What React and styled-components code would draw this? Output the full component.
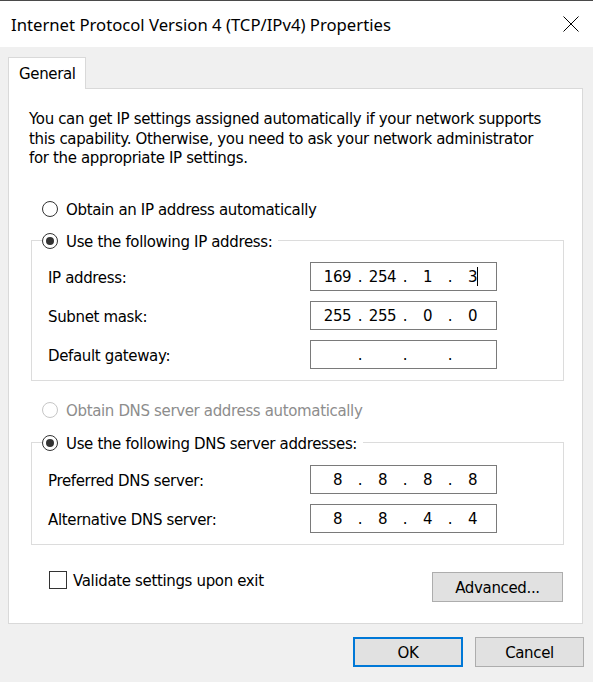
import React from "react";
import styled, { createGlobalStyle } from "styled-components";

const Global = createGlobalStyle`
  html, body { margin: 0; padding: 0; }
  body {
    background: #f0f0f0;
    font-family: "DejaVu Sans", "Liberation Sans", sans-serif;
    font-size: 15px;
    letter-spacing: -0.35px;
    color: #000;
  }
  * { box-sizing: border-box; }
`;

const Window = styled.div`
  width: 593px;
  height: 682px;
  display: flex;
  flex-direction: column;
  background: #f0f0f0;
  overflow: hidden;
`;

const TitleBar = styled.div`
  height: 47px;
  border-top: 1px solid #4a4a4a;
  background: #fff;
  display: flex;
  align-items: center;
  justify-content: space-between;
  padding: 0 14px 0 11px;
`;

const Title = styled.span`
  font-family: "Noto Sans", "Open Sans", sans-serif;
  font-size: 16.7px;
  letter-spacing: 0;
  color: #000;
`;

const CloseIcon = styled.svg`
  width: 16px;
  height: 16px;
  display: block;
`;

const Body = styled.div`
  padding: 10px 0 0 8px;
  display: flex;
  flex-direction: column;
`;

const Tab = styled.div`
  position: relative;
  z-index: 1;
  width: 78px;
  height: 32px;
  margin-bottom: -1px;
  background: #fff;
  border: 1px solid #d9d9d9;
  border-bottom: none;
  display: flex;
  align-items: center;
  padding-left: 10px;
  padding-top: 1px;
`;

const Panel = styled.div`
  width: 575px;
  background: #fff;
  border: 1px solid #d9d9d9;
  padding: 20px 18px 21px 19px;
  display: flex;
  flex-direction: column;
`;

const Description = styled.div`
  line-height: 19.5px;
  white-space: nowrap;
  padding: 1px 0 0 1px;
`;

const RadioRow = styled.label`
  display: flex;
  align-items: center;
  gap: 8px;
  height: 20px;
  margin-top: ${(p) => p.$top}px;
  padding-left: 14px;
  color: ${(p) => (p.$disabled ? "#8d8d8d" : "#000")};
`;

const RadioText = styled.span`
  padding-top: 2px;
`;

const Radio = styled.span`
  width: 16px;
  height: 16px;
  border-radius: 50%;
  border: 1px solid ${(p) => (p.$disabled ? "#c6c6c6" : "#333")};
  background: #fff;
  display: flex;
  align-items: center;
  justify-content: center;
  flex: none;
  &::after {
    content: "";
    width: 8px;
    height: 8px;
    border-radius: 50%;
    background: #333;
    display: ${(p) => (p.$checked ? "block" : "none")};
  }
`;

const Group = styled.fieldset`
  margin: ${(p) => p.$top}px 0 0 3px;
  padding: ${(p) => p.$padTop}px 0 11px 0;
  border: 1px solid #dcdcdc;
  min-width: 0;
`;

const Legend = styled.legend`
  margin-left: 10px;
  padding: 0 6px 0 0;
  height: 20px;
  display: flex;
  align-items: center;
  gap: 8px;
`;

const Rows = styled.div`
  display: flex;
  flex-direction: column;
  gap: 10px;
  padding-left: 16px;
`;

const Row = styled.div`
  display: grid;
  grid-template-columns: 262px 187px;
  align-items: center;
`;

const FieldLabel = styled.span`
  padding-top: 3px;
`;

const IPBox = styled.div`
  width: 187px;
  height: 29px;
  border: 1px solid #7a7a7a;
  background: #fff;
  display: flex;
  align-items: center;
  padding: 2px 0 0 8px;
`;

const Octet = styled.span`
  width: 37px;
  text-align: center;
  white-space: nowrap;
`;

const Dot = styled.span`
  width: 8px;
  text-align: center;
`;

const Caret = styled.span`
  display: inline-block;
  width: 1px;
  height: 19px;
  background: #000;
  vertical-align: middle;
  margin-right: -1px;
  margin-top: -3px;
`;

const BottomRow = styled.div`
  display: flex;
  justify-content: space-between;
  align-items: flex-start;
  margin-top: 26px;
`;

const CheckLabel = styled.label`
  display: flex;
  align-items: center;
  gap: 6px;
  height: 18px;
  padding-left: 21px;
`;

const CheckBox = styled.span`
  width: 18px;
  height: 18px;
  border: 1px solid #333;
  background: #fff;
  flex: none;
`;

const Button = styled.button`
  font: inherit;
  letter-spacing: inherit;
  color: #000;
  width: ${(p) => p.$w}px;
  height: 30px;
  margin-top: ${(p) => p.$mt || 0}px;
  margin-right: ${(p) => p.$mr || 0}px;
  background: #e1e1e1;
  border: ${(p) => (p.$primary ? "2px solid #0078d7" : "1px solid #adadad")};
  padding: 3px 0 0 0;
  display: flex;
  align-items: center;
  justify-content: center;
`;

const Footer = styled.div`
  display: flex;
  justify-content: flex-end;
  gap: 12px;
  padding: 13px 9px 0 0;
`;

function IPField({ parts, caret }) {
  return (
    <IPBox>
      {parts.map((p, i) => (
        <React.Fragment key={i}>
          {i > 0 && <Dot>.</Dot>}
          <Octet>
            {p}
            {caret && i === 3 && <Caret />}
          </Octet>
        </React.Fragment>
      ))}
    </IPBox>
  );
}

export default function App() {
  return (
    <>
      <Global />
      <Window>
        <TitleBar>
          <Title>Internet Protocol Version 4 (TCP/IPv4) Properties</Title>
          <CloseIcon viewBox="0 0 16 16">
            <path d="M0.5 0.5 L15.5 15.5 M15.5 0.5 L0.5 15.5" stroke="#000" strokeWidth="1" fill="none" />
          </CloseIcon>
        </TitleBar>
        <Body>
          <Tab>General</Tab>
          <Panel>
            <Description>
              <div>You can get IP settings assigned automatically if your network supports</div>
              <div>this capability. Otherwise, you need to ask your network administrator</div>
              <div>for the appropriate IP settings.</div>
            </Description>

            <RadioRow $top={30}>
              <Radio />
              <RadioText>Obtain an IP address automatically</RadioText>
            </RadioRow>

            <Group $top={12} $padTop={11}>
              <Legend>
                <Radio $checked />
                <RadioText>Use the following IP address:</RadioText>
              </Legend>
              <Rows>
                <Row>
                  <FieldLabel>IP address:</FieldLabel>
                  <IPField parts={["169", "254", "1", "3"]} caret />
                </Row>
                <Row>
                  <FieldLabel>Subnet mask:</FieldLabel>
                  <IPField parts={["255", "255", "0", "0"]} />
                </Row>
                <Row>
                  <FieldLabel>Default gateway:</FieldLabel>
                  <IPField parts={["", "", "", ""]} />
                </Row>
              </Rows>
            </Group>

            <RadioRow $top={19} $disabled>
              <Radio $disabled />
              <RadioText>Obtain DNS server address automatically</RadioText>
            </RadioRow>

            <Group $top={13} $padTop={12}>
              <Legend>
                <Radio $checked />
                <RadioText>Use the following DNS server addresses:</RadioText>
              </Legend>
              <Rows>
                <Row>
                  <FieldLabel>Preferred DNS server:</FieldLabel>
                  <IPField parts={["8", "8", "8", "8"]} />
                </Row>
                <Row>
                  <FieldLabel>Alternative DNS server:</FieldLabel>
                  <IPField parts={["8", "8", "4", "4"]} />
                </Row>
              </Rows>
            </Group>

            <BottomRow>
              <CheckLabel>
                <CheckBox />
                <RadioText>Validate settings upon exit</RadioText>
              </CheckLabel>
              <Button $w={131} $mt={1} $mr={1}>Advanced...</Button>
            </BottomRow>
          </Panel>
          <Footer>
            <Button $w={110} $primary>OK</Button>
            <Button $w={109}>Cancel</Button>
          </Footer>
        </Body>
      </Window>
    </>
  );
}
